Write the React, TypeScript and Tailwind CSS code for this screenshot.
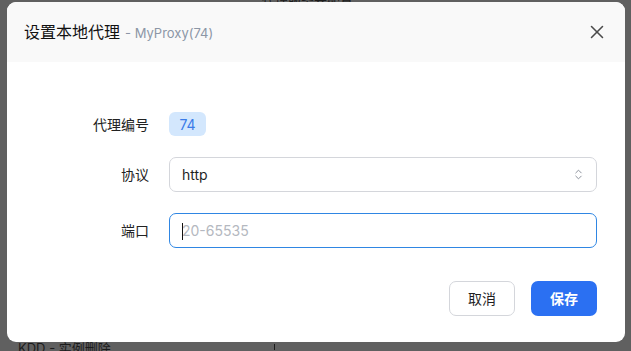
import { X, ChevronsUpDown } from 'lucide-react'

const font = { fontFamily: 'Inter, "Noto Sans CJK SC", sans-serif' }

export default function App() {
  return (
    <div className="relative h-[351px] w-[631px] overflow-hidden bg-[#606060]" style={font}>
      {/* page behind the overlay */}
      <div className="absolute left-[262px] top-[-9px] text-[13px] text-[#1c1c1c]">代理服务器配置</div>
      <div className="absolute left-[18px] top-[339px] text-[13px] text-[#1c1c1c]">KDD - 实例删除</div>
      <div className="absolute left-[274px] top-[344px] h-[6px] w-px bg-[#1c1c1c]" />

      <div className="relative flex pl-[7px] pt-[2px]">
        <div className="flex h-[340px] w-[618px] flex-col overflow-hidden rounded-[9px] bg-white">
          {/* header */}
          <div className="flex h-[60px] items-center justify-between bg-[#f9f9f9] pl-[17px] pr-[16px]">
            <div className="flex items-baseline">
              <span className="text-[16px] text-[#111]">设置本地代理</span>
              <span className="ml-[5px] text-[13px] text-[#8c96a6]">- MyProxy(74)</span>
            </div>
            <X size={22} strokeWidth={1.7} className="mr-[1px] text-[#4b4b4b]" />
          </div>

          {/* body */}
          <div className="flex flex-col pr-[28px] pt-[50px]">
            <div className="flex h-[24px] items-center">
              <div className="w-[142px] text-right text-[14px] text-[#222]">代理编号</div>
              <div className="ml-[20px] flex h-[24px] w-[37px] items-center justify-center rounded-[6px] bg-[#d3e7fd] text-[14px] text-[#3a7be8]">
                74
              </div>
            </div>

            <div className="mt-[21px] flex h-[35px] items-center">
              <div className="w-[142px] text-right text-[14px] text-[#222]">协议</div>
              <div className="ml-[20px] flex h-[35px] flex-1 items-center justify-between rounded-[7px] border border-[#d4d6db] pl-[12px] pr-[11px]">
                <span className="text-[14px] text-[#1f1f1f]">http</span>
                <ChevronsUpDown size={13} strokeWidth={1.8} className="text-[#8a8f99]" />
              </div>
            </div>

            <div className="mt-[21px] flex h-[35px] items-center">
              <div className="w-[142px] text-right text-[14px] text-[#222]">端口</div>
              <div className="relative ml-[20px] flex h-[35px] flex-1 items-center rounded-[7px] border border-[#2f86e3] pl-[12px]">
                <span className="absolute left-[12px] top-[9px] h-[17px] w-px bg-[#111]" />
                <span className="text-[14px] text-[#b4b8c0]">20-65535</span>
              </div>
            </div>

            <div className="mt-[33px] flex justify-end gap-[16px]">
              <button className="h-[35px] w-[66px] rounded-[7px] border border-[#d4d6db] bg-white text-[14px] text-[#1f1f1f]">
                取消
              </button>
              <button className="h-[35px] w-[66px] rounded-[7px] bg-[#2b70f2] text-[14px] font-semibold text-white">
                保存
              </button>
            </div>
          </div>
        </div>
      </div>
    </div>
  )
}
